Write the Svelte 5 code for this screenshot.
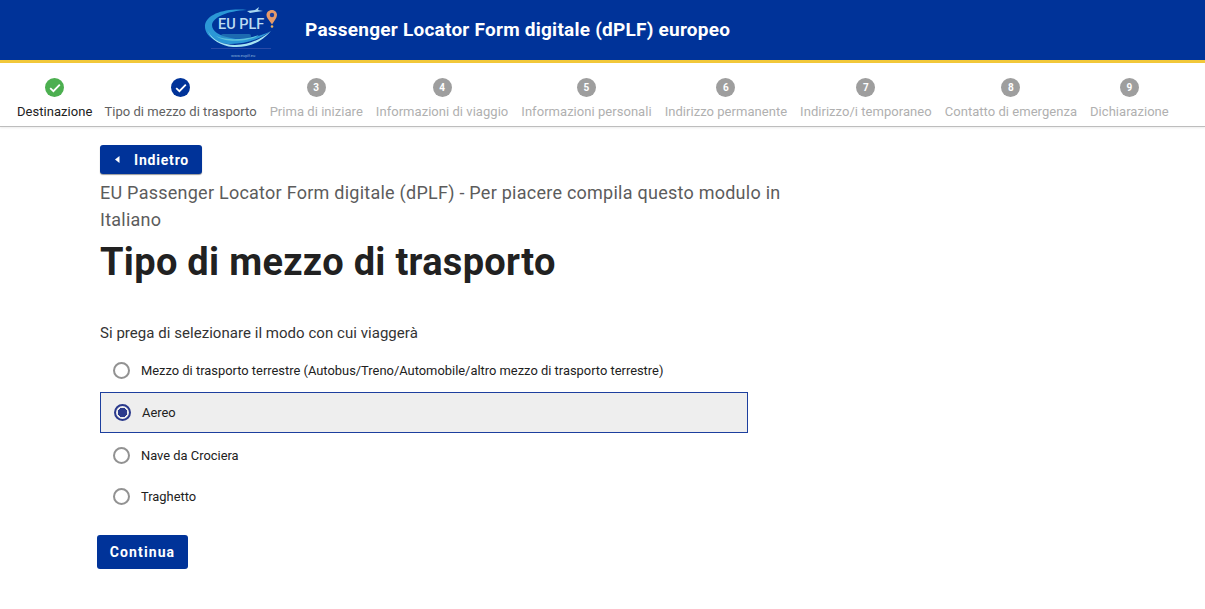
<script>
	let steps = [
		{ label: 'Tipo di mezzo di trasporto', state: 'current' },
		{ label: 'Prima di iniziare', n: 3 },
		{ label: 'Informazioni di viaggio', n: 4 },
		{ label: 'Informazioni personali', n: 5 },
		{ label: 'Indirizzo permanente', n: 6 },
		{ label: 'Indirizzo/i temporaneo', n: 7 },
		{ label: 'Contatto di emergenza', n: 8 },
		{ label: 'Dichiarazione', n: 9 }
	];

	let options = [
		'Mezzo di trasporto terrestre (Autobus/Treno/Automobile/altro mezzo di trasporto terrestre)',
		'Aereo',
		'Nave da Crociera',
		'Traghetto'
	];

	let selected = $state('Aereo');
</script>

<header class="topbar">
	<svg class="logo" width="76" height="60" viewBox="0 0 76 60">
		<!-- swoosh -->
		<path d="M44 10 C22 8 4 14 2 25 C1 36 14 44 28 44 C42 44 56 40 68 31 C56 37 42 40 28 38 C16 36 9 31 9 25 C10 17 24 11 44 10 Z" fill="#2b97d6" />
		<path d="M5 31 C9 40 20 45 32 45 C46 45 58 39 68 31 C58 43 44 48 30 47 C18 46 8 40 5 31 Z" fill="#a6e4f2" />
		<path d="M13 36 C24 41 42 40 56 35 C48 41 24 44 13 36 Z" fill="#5fc3dc" />
		<rect x="18" y="34" width="30" height="4" rx="2" fill="#2f8fc0" opacity="0.6" />
		<!-- plane -->
		<path d="M44 11 L52 10 L56 7 L55 10 L60 11 L53 12 L47 13 Z" fill="#a9d8f0" />
		<text x="15" y="29" class="logo-text">EU PLF</text>
		<!-- pin -->
		<path d="M69 10 C65.5 10 63.5 12.5 63.5 15 C63.5 18 67 21 69 24.5 C71 21 74 18 74 15 C74 12.5 72 10 69 10 Z" fill="#e59a6a" />
		<circle cx="69" cy="15" r="2.2" fill="#1d3f9e" />
		<circle cx="69" cy="26.5" r="1.3" fill="#e8b060" />
		<rect x="8" y="48" width="60" height="1" fill="#2a4aa8" />
		<text x="28" y="57" class="logo-url">www.euplf.eu</text>
	</svg>
	<span class="site-title">Passenger Locator Form digitale (dPLF) europeo</span>
</header>

<nav class="stepper">
	<div class="step done">
		<span class="dot green">
			<svg width="12" height="10" viewBox="0 0 12 10"><path d="M1.2 5.2 L4.4 8.2 L10.8 1.6" fill="none" stroke="#fff" stroke-width="1.8" /></svg>
		</span>
		<span class="label">Destinazione</span>
	</div>
	{#each steps as s}
		<div class="step" class:current={s.state == 'current'}>
			{#if s.state == 'current'}
				<span class="dot blue">
					<svg width="12" height="10" viewBox="0 0 12 10"><path d="M1.2 5.2 L4.4 8.2 L10.8 1.6" fill="none" stroke="#fff" stroke-width="1.8" /></svg>
				</span>
			{:else}
				<span class="dot grey">{s.n}</span>
			{/if}
			<span class="label">{s.label}</span>
		</div>
	{/each}
</nav>

<main class="content">
	<button class="btn back">
		<svg width="5" height="7" viewBox="0 0 5 7"><path d="M4.5 0 L0 3.5 L4.5 7 Z" fill="#fff" /></svg>
		Indietro
	</button>
	<p class="intro">EU Passenger Locator Form digitale (dPLF) - Per piacere compila questo modulo in Italiano</p>
	<h1>Tipo di mezzo di trasporto</h1>

	<p class="question">Si prega di selezionare il modo con cui viaggerà</p>
	<div class="options">
		{#each options as opt}
			<label class="option" class:selected={selected == opt}>
				<input type="radio" name="mode" value={opt} bind:group={selected} />
				<span class="radio"></span>
				<span>{opt}</span>
			</label>
		{/each}
	</div>

	<button class="btn next">Continua</button>
</main>

<style>
	:global(body) {
		font-family: Roboto, "Liberation Sans", sans-serif;
		background: #fff;
	}

	/* ---------- TOP BAR ---------- */

	.topbar {
		display: flex;
		align-items: center;
		height: 60px;
		padding-left: 203px;
		background: #003399;
		border-bottom: 3px solid #f2c83a;
	}

	.logo {
		flex: none;
	}

	.logo-text {
		font-size: 14.5px;
		font-weight: 500;
		fill: #bcdcf2;
		font-family: Roboto, sans-serif;
	}

	.logo-url {
		font-size: 4px;
		fill: #8fb4dc;
	}

	.site-title {
		margin-left: 26px;
		margin-top: -2px;
		color: #fff;
		font-size: 19px;
		font-weight: 700;
		letter-spacing: 0.24px;
		white-space: nowrap;
	}

	/* ---------- STEPPER ---------- */

	.stepper {
		display: flex;
		justify-content: flex-start;
		gap: 13px;
		height: 64px;
		padding-left: 17px;
		box-sizing: border-box;
		background: #fff;
		border-bottom: 1px solid #bdbdbd;
		box-shadow: 0 1px 2px rgba(0, 0, 0, 0.08);
	}

	.step {
		display: flex;
		flex-direction: column;
		align-items: center;
		padding-top: 15px;
		color: #b0b0b0;
		font-size: 13px;
		white-space: nowrap;
	}

	.step.done {
		margin-right: -1px;
		color: #212121;
	}

	.step.current {
		color: #616161;
	}

	.label {
		margin-top: 7px;
		line-height: 15px;
		letter-spacing: 0.04px;
	}

	.dot {
		display: flex;
		align-items: center;
		justify-content: center;
		width: 19px;
		height: 19px;
		border-radius: 50%;
		color: #fff;
		font-size: 10px;
		font-weight: 700;
	}

	.dot.green {
		background: #4caf50;
	}

	.dot.blue {
		background: #003399;
	}

	.dot.grey {
		background: #9e9e9e;
	}

	/* ---------- CONTENT ---------- */

	.content {
		padding: 18px 0 0 100px;
		width: 700px;
	}

	.btn {
		display: flex;
		align-items: center;
		border: none;
		border-radius: 3px;
		background: #003399;
		color: #fff;
		font-family: inherit;
		font-weight: 700;
		font-size: 14px;
	}

	.back {
		gap: 14px;
		height: 29px;
		width: 102px;
		padding: 0 0 0 15px;
		letter-spacing: 0.8px;
		box-shadow: 0 1px 1px rgba(0, 0, 0, 0.4);
	}

	.intro {
		margin: 5px 0 0;
		color: #5c5c5c;
		font-size: 18px;
		line-height: 27px;
		letter-spacing: 0.25px;
	}

	h1 {
		margin: 5px 0 0;
		color: #212121;
		font-size: 38px;
		line-height: 48px;
		font-weight: 700;
		letter-spacing: 0.3px;
	}

	.question {
		margin: 37px 0 0;
		color: #333;
		font-size: 15px;
		line-height: 20px;
		letter-spacing: 0.04px;
	}

	.options {
		display: flex;
		flex-direction: column;
		margin-top: 7px;
		width: 648px;
	}

	.option {
		display: flex;
		align-items: center;
		gap: 11px;
		height: 41px;
		padding-left: 13px;
		box-sizing: border-box;
		color: #212121;
		font-size: 12.9px;
		white-space: nowrap;
	}

	.option.selected {
		padding-left: 13px;
		margin: 1px 0 2px;
		background: #eeeeee;
		border: 1px solid #1d3f9e;
	}

	.option input {
		display: none;
	}

	.radio {
		flex: none;
		width: 17px;
		height: 17px;
		box-sizing: border-box;
		border: 2px solid #929292;
		border-radius: 50%;
		background: #fff;
	}

	.option.selected .radio {
		border-color: #2b3a8c;
		background: radial-gradient(circle, #2b3a8c 0 4.5px, transparent 5px);
	}

	.next {
		justify-content: center;
		width: 91px;
		height: 34px;
		margin: 18px 0 0 -3px;
		letter-spacing: 1.1px;
	}
</style>
